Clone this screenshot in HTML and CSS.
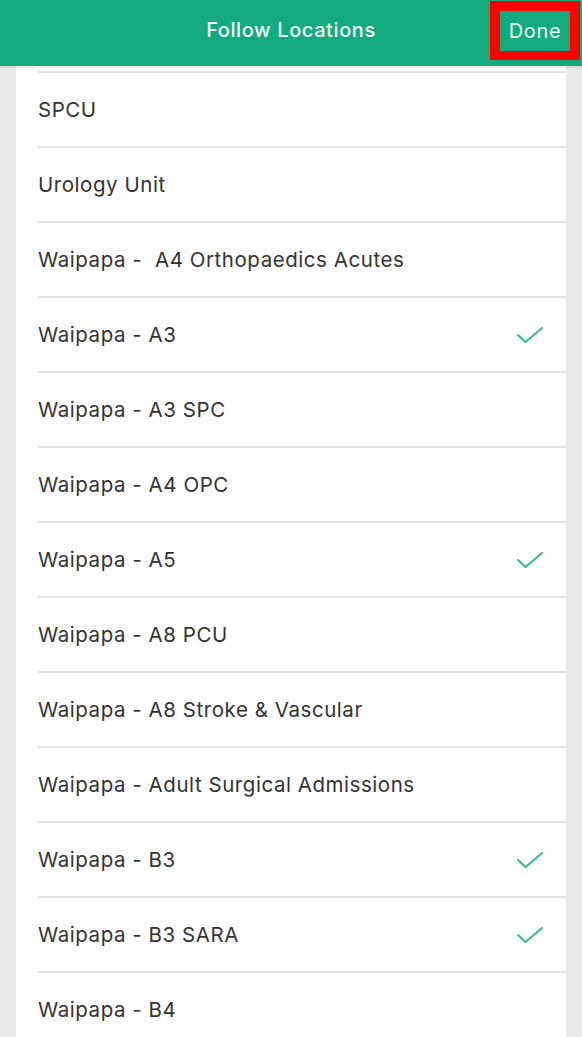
FILE: index.html
```html
<!DOCTYPE html>
<html lang="en">

<head>
    <meta charset="UTF-8">
    <meta name="viewport" content="width=device-width, initial-scale=1.0">
    <title>Follow Locations</title>
    <link rel="stylesheet" href="styles.css">
</head>

<body>

    <!-- Top Bar -->
    <header class="top-bar">
        <h1 class="top-title">Follow Locations</h1>
        <a href="javascript:void(0)" class="done-btn">Done</a>
    </header>

    <!-- Location List -->
    <ul class="location-list">
        <li class="location-item"><span>SPCU</span></li>
        <li class="location-item"><span>Urology Unit</span></li>
        <li class="location-item"><span>Waipapa -&nbsp; A4 Orthopaedics Acutes</span></li>
        <li class="location-item checked"><span>Waipapa - A3</span>
            <svg class="check" viewBox="0 0 28 20" width="28" height="20"><path d="M2 10 L9.5 17 L26 3" /></svg>
        </li>
        <li class="location-item"><span>Waipapa - A3 SPC</span></li>
        <li class="location-item"><span>Waipapa - A4 OPC</span></li>
        <li class="location-item checked"><span>Waipapa - A5</span>
            <svg class="check" viewBox="0 0 28 20" width="28" height="20"><path d="M2 10 L9.5 17 L26 3" /></svg>
        </li>
        <li class="location-item"><span>Waipapa - A8 PCU</span></li>
        <li class="location-item"><span>Waipapa - A8 Stroke &amp; Vascular</span></li>
        <li class="location-item"><span>Waipapa - Adult Surgical Admissions</span></li>
        <li class="location-item checked"><span>Waipapa - B3</span>
            <svg class="check" viewBox="0 0 28 20" width="28" height="20"><path d="M2 10 L9.5 17 L26 3" /></svg>
        </li>
        <li class="location-item checked"><span>Waipapa - B3 SARA</span>
            <svg class="check" viewBox="0 0 28 20" width="28" height="20"><path d="M2 10 L9.5 17 L26 3" /></svg>
        </li>
        <li class="location-item"><span>Waipapa - B4</span></li>
    </ul>

</body>

</html>
```

FILE: styles.css
```css
/* Basic page */
body {
    font-family: Inter, "Liberation Sans", Arial, sans-serif;
    background-color: #e9e9e9;
    margin: 0;
    padding: 0;
    height: 100vh;
    overflow: hidden;
}

/* Top Bar */
.top-bar {
    position: relative;
    background-color: #13ab7c;
    height: 66px;
    display: flex;
    align-items: center;
    justify-content: center;
    box-shadow: 0 1px 3px rgba(0, 0, 0, 0.15);
    z-index: 2;
}

.top-title {
    margin: 0 0 6px 0;
    color: #f4fbf8;
    font-size: 20px;
    font-weight: 500;
    letter-spacing: 0.6px;
}

.done-btn {
    position: absolute;
    top: 1px;
    right: 2px;
    box-sizing: border-box;
    width: 90px;
    height: 59px;
    border: 10px solid #ff0000;
    border-bottom-width: 9px;
    display: flex;
    align-items: center;
    justify-content: center;
    color: #e8f6f0;
    font-size: 20px;
    letter-spacing: 0.7px;
    text-decoration: none;
}

/* List */
.location-list {
    list-style: none;
    margin: 0 16px;
    padding: 5px 0 0 0;
    background-color: white;
    min-height: 100%;
}

.location-item {
    margin-left: 22px;
    height: 73px;
    border-top: 2px solid #e3e3e3;
    display: flex;
    align-items: center;
    justify-content: space-between;
    padding-right: 22px;
    color: #333;
    font-size: 20.5px;
    letter-spacing: 0.55px;
}

.check {
    fill: none;
    stroke: #2fbf88;
    stroke-width: 2;
    stroke-linecap: round;
    stroke-linejoin: round;
}
```
